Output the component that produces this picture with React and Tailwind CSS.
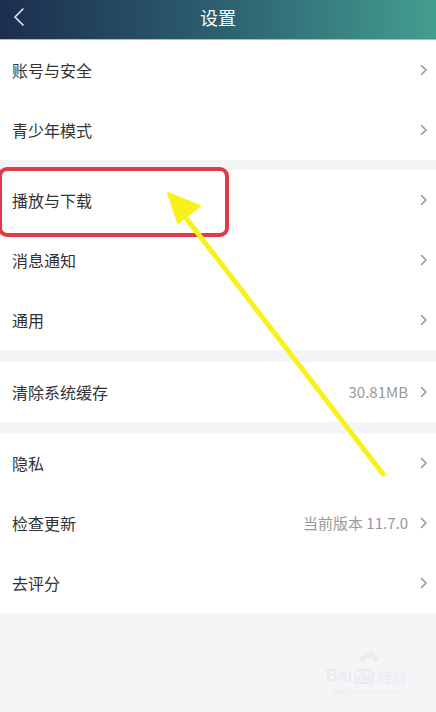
import * as React from 'react';

const Chevron = () => (
  <svg width="8" height="12" viewBox="0 0 8 12" className="shrink-0">
    <path d="M1.5 1.5 L6 6 L1.5 10.5" fill="none" stroke="#9a9a9a" strokeWidth="1.6" strokeLinecap="round" strokeLinejoin="round" />
  </svg>
);

function Row({ label, value }) {
  return (
    <div className="h-[60px] bg-white flex items-center pl-3 pr-2">
      <span className="flex-1 text-[16px] text-[#333]">{label}</span>
      {value && <span className="text-[15px] text-[#999] mr-3">{value}</span>}
      <Chevron />
    </div>
  );
}

function Group({ rows }) {
  return (
    <div className="flex flex-col">
      {rows.map((r) => (
        <Row key={r.label} {...r} />
      ))}
    </div>
  );
}

export default function App() {
  return (
    <div
      className="relative w-[436px] h-[712px] bg-[#f4f5f7] overflow-hidden"
      style={{ fontFamily: '"Noto Sans CJK SC", "Noto Sans", sans-serif' }}
    >
      {/* header */}
      <div className="h-[40px] flex items-center justify-center relative bg-gradient-to-r from-[#1c2e4e] via-[#2c6070] to-[#449e8f] border-b border-[#8fc9cf]">
        <svg width="12" height="20" viewBox="0 0 12 20" className="absolute left-[13px] top-[7px]">
          <path d="M10 2 L2 10 L10 18" fill="none" stroke="#e8eef2" strokeWidth="1.6" strokeLinecap="round" strokeLinejoin="round" />
        </svg>
        <span className="text-white text-[18px] -mt-[4px]">设置</span>
      </div>

      <div className="flex flex-col gap-[10px]">
        <Group rows={[{ label: '账号与安全' }, { label: '青少年模式' }]} />
        <div className="flex flex-col gap-[12px]">
          <Group rows={[{ label: '播放与下载' }, { label: '消息通知' }, { label: '通用' }]} />
          <div className="flex flex-col gap-[11px]">
            <Group rows={[{ label: '清除系统缓存', value: '30.81MB' }]} />
            <Group
              rows={[
                { label: '隐私' },
                { label: '检查更新', value: '当前版本 11.7.0' },
                { label: '去评分' },
              ]}
            />
          </div>
        </div>
      </div>

      {/* red highlight box */}
      <div className="absolute left-[-2px] top-[167px] w-[231px] h-[70px] border-[4px] border-[#e23a4b] rounded-[9px]" />

      {/* yellow arrow */}
      <svg className="absolute left-0 top-0" width="436" height="712" viewBox="0 0 436 712">
        <line x1="383" y1="474" x2="186" y2="218" stroke="#f7f21b" strokeWidth="5" strokeLinecap="round" />
        <polygon points="168,193 200,206 178,223" fill="#f7f21b" stroke="#f7f21b" strokeWidth="2" strokeLinejoin="round" />
      </svg>

      {/* watermark */}
      <div className="absolute left-[320px] top-[652px] w-[92px] flex flex-col items-center gap-[3px] opacity-70">
        <svg width="20" height="12" viewBox="0 0 20 12" className="ml-[6px]">
          <ellipse cx="4" cy="7" rx="2.5" ry="3" fill="#e6e8ec" />
          <ellipse cx="8" cy="3" rx="2.5" ry="3" fill="#e6e8ec" />
          <ellipse cx="13" cy="3" rx="2.5" ry="3" fill="#e6e8ec" />
          <ellipse cx="17" cy="7" rx="2.5" ry="3" fill="#e6e8ec" />
        </svg>
        <div className="flex items-end gap-[2px] text-[#e6e8ec] leading-none">
          <span className="text-[17px] font-bold leading-none" style={{ fontFamily: '"Liberation Sans", sans-serif' }}>Bai</span>
          <span className="text-[11px] font-bold leading-none border-2 border-[#e6e8ec] rounded-[4px] px-[1px]">du</span>
          <span className="text-[14px] leading-none ml-[2px]">经验</span>
        </div>
        <span className="text-[9px] text-[#eaecf0] leading-none" style={{ fontFamily: '"Liberation Serif", serif' }}>jingyan.baidu.com</span>
      </div>
    </div>
  );
}
